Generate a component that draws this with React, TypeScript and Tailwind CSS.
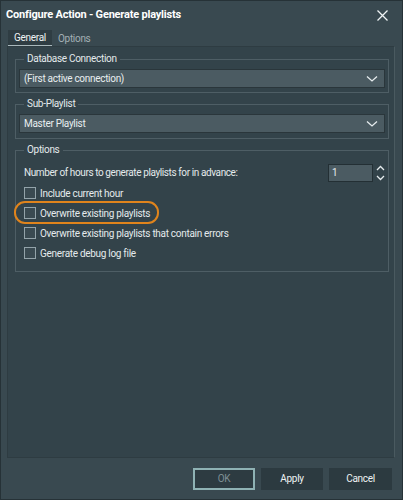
import type { JSX, ReactNode } from 'react'

const font = { fontFamily: 'Roboto, "Noto Sans", sans-serif' }

function Chevron(): JSX.Element {
  return (
    <svg width="12" height="8" viewBox="0 0 12 8" className="shrink-0">
      <path d="M1 1.5 L6 6 L11 1.5" fill="none" stroke="#e6ecee" strokeWidth="1.3" />
    </svg>
  )
}

function Combo(props: { value: string }): JSX.Element {
  return (
    <div className="flex h-[19px] items-center justify-between border border-[#2a363b] bg-[#4b5b62] pl-[4px] pr-[6px] text-[#e8eef0]">
      <span>{props.value}</span>
      <Chevron />
    </div>
  )
}

function Group(props: { label: string; className?: string; children: ReactNode }): JSX.Element {
  return (
    <fieldset
      className={`ml-[7px] mr-[5px] border border-[#4e5e65] px-[3px] pt-0 ${props.className ?? ''}`}
    >
      <legend className="ml-[5px] px-[3px] leading-[14px] text-[#e4eaec]">{props.label}</legend>
      {props.children}
    </fieldset>
  )
}

function Check(props: { label: string; className?: string }): JSX.Element {
  return (
    <div className={`flex h-[20px] items-center gap-[4px] text-[#e4eaec] ${props.className ?? ''}`}>
      <span className="h-[12px] w-[12px] border border-[#93a3a9] bg-[#3a4a51]" />
      <span>{props.label}</span>
    </div>
  )
}

export default function App(): JSX.Element {
  return (
    <div
      style={font}
      className="flex h-[500px] w-[403px] flex-col border border-[#263237] bg-[#394950] text-[10px] tracking-[-0.3px] text-[#e8eef0]"
    >
      {/* title bar */}
      <div className="flex h-[29px] items-center justify-between pl-[5px] pr-[14px]">
        <span className="text-[11px] font-bold tracking-[-0.2px] text-white">
          Configure Action - Generate playlists
        </span>
        <svg width="11" height="11" viewBox="0 0 11 11">
          <path d="M0.5 0.5 L10.5 10.5 M10.5 0.5 L0.5 10.5" stroke="#f0f4f5" strokeWidth="1.3" />
        </svg>
      </div>

      {/* tabs */}
      <div className="flex h-[16px] items-end pl-[7px]">
        <div className="flex h-[16px] w-[44px] items-center justify-center border-b border-[#a9b8bc] bg-[#2f3d43] text-[#eef2f3]">
          General
        </div>
        <div className="flex h-[16px] items-center pl-[6px] text-[#a3b0b5]">Options</div>
      </div>

      {/* tab page */}
      <div className="ml-[6px] mr-[7px] flex h-[412px] flex-col border border-[#2e3c42] border-r-[#4a5a60] bg-[#33434a] pt-[5px]">
        <Group label="Database Connection" className="pb-[4px]">
          <div className="pt-[3px]">
            <Combo value="(First active connection)" />
          </div>
        </Group>
        <Group label="Sub-Playlist" className="mt-[4px] pb-[5px]">
          <div className="pt-[3px]">
            <Combo value="Master Playlist" />
          </div>
        </Group>
        <Group label="Options" className="mt-[4px] pb-[8px]">
          <div className="flex flex-col pl-[5px] pt-[5px]">
            <div className="flex h-[21px] items-center justify-between text-[#e4eaec]">
              <span className="tracking-[-0.4px]">Number of hours to generate playlists for in advance:</span>
              <div className="flex items-center gap-[3px]">
                <div className="flex h-[18px] w-[45px] items-center border border-[#232f34] bg-[#4b5b62] pl-[3px]">
                  1
                </div>
                <svg width="9" height="18" viewBox="0 0 9 18">
                  <path
                    d="M1 6 L4.5 2.5 L8 6 M1 12 L4.5 15.5 L8 12"
                    fill="none"
                    stroke="#e6ecee"
                    strokeWidth="1.3"
                  />
                </svg>
              </div>
            </div>
            <Check label="Include current hour" />
            <div className="relative">
              <Check label="Overwrite existing playlists" className="h-[19px]" />
              <div className="pointer-events-none absolute left-[-10px] top-[-2px] h-[23px] w-[145px] rounded-[11px] border-2 border-[#e0841c]" />
            </div>
            <Check label="Overwrite existing playlists that contain errors" />
            <Check label="Generate debug log file" />
          </div>
        </Group>
      </div>

      {/* footer */}
      <div className="flex flex-1 items-center justify-end gap-[6px] pr-[10px]">
        <div className="flex h-[22px] w-[62px] items-center justify-center border-2 border-[#8fb2b4] bg-[#2d3b41] text-[#7e8f94]">
          OK
        </div>
        <div className="flex h-[22px] w-[62px] items-center justify-center bg-[#2c3a40] text-[#eef2f3]">
          Apply
        </div>
        <div className="flex h-[22px] w-[63px] items-center justify-center bg-[#2c3a40] text-[#eef2f3]">
          Cancel
        </div>
      </div>
    </div>
  )
}
